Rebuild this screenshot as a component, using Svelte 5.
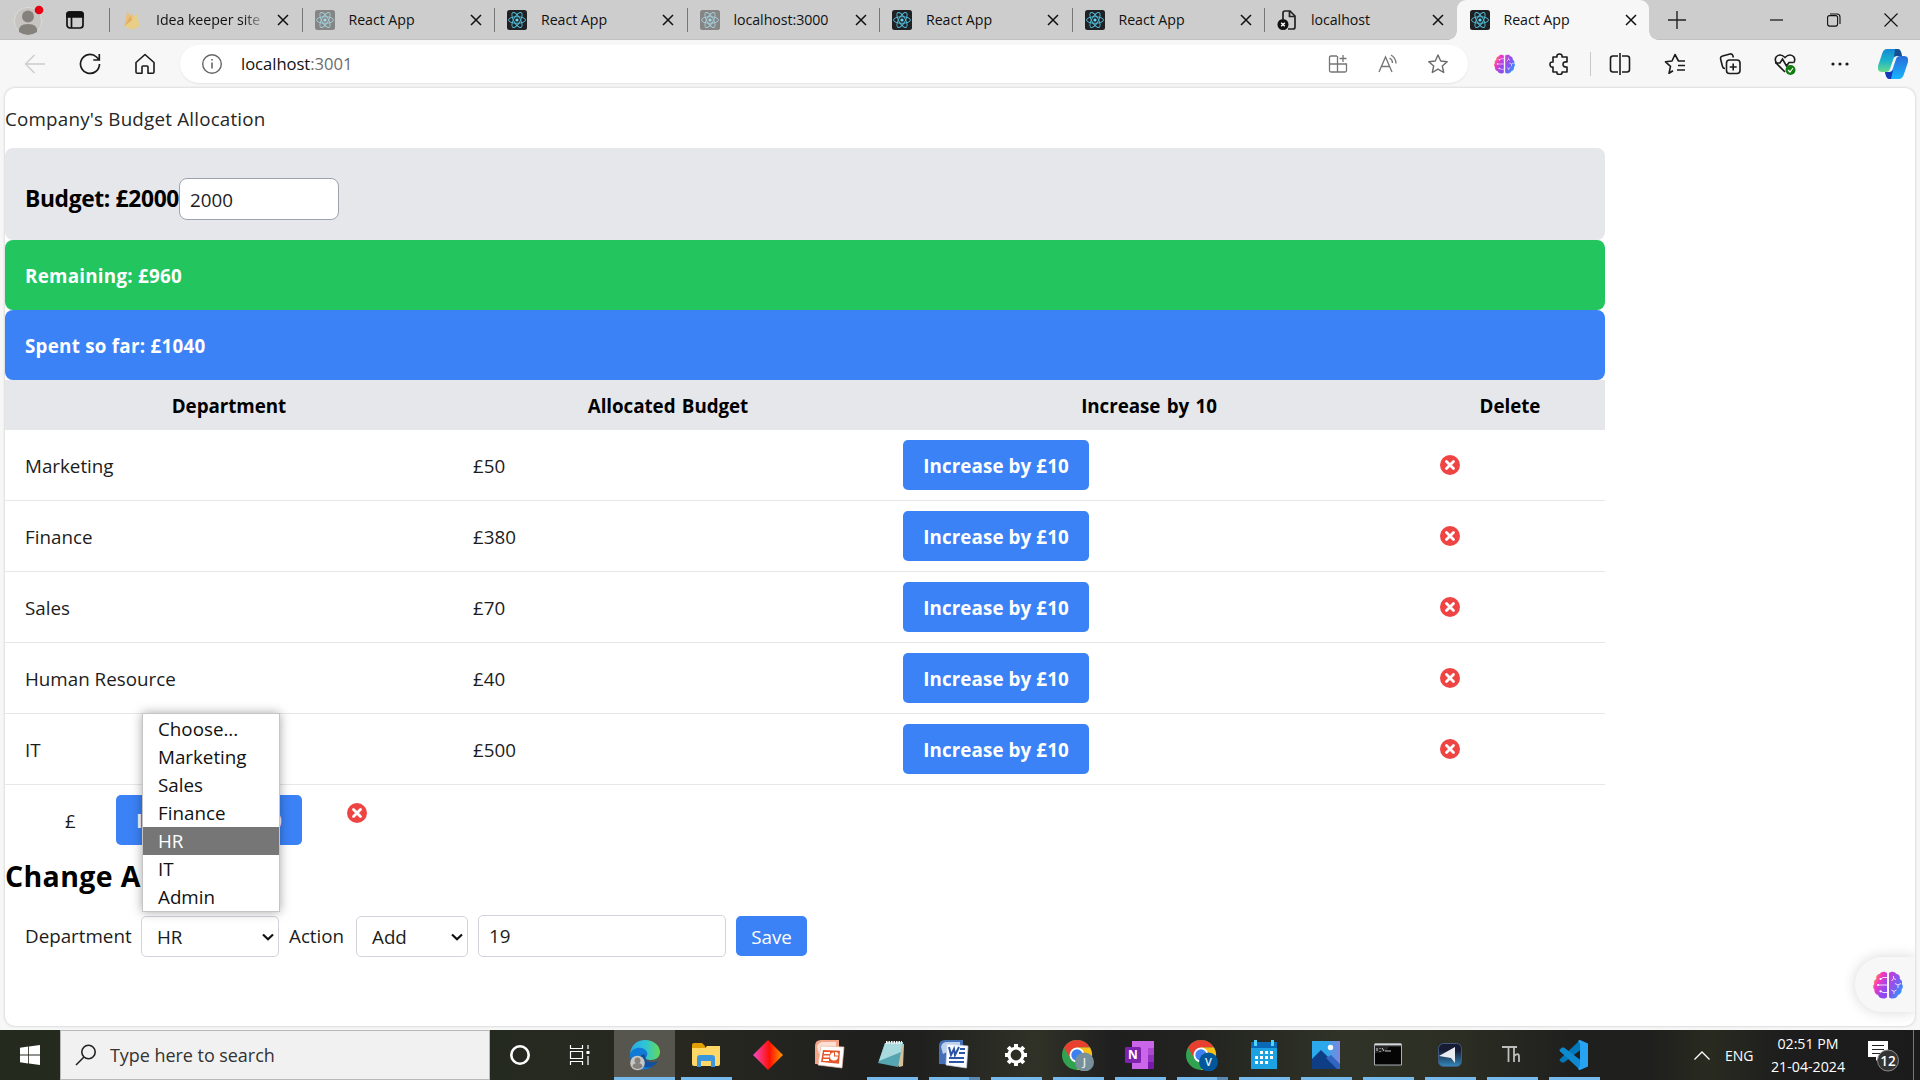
<script>
  const tabs = [
    { title: 'Idea keeper site -', icon: 'firebase' },
    { title: 'React App', icon: 'react-dim' },
    { title: 'React App', icon: 'react' },
    { title: 'localhost:3000', icon: 'react-dim' },
    { title: 'React App', icon: 'react' },
    { title: 'React App', icon: 'react' },
    { title: 'localhost', icon: 'page' },
    { title: 'React App', icon: 'react', active: true },
  ];
  const rows = [
    { name: 'Marketing', budget: 50 },
    { name: 'Finance', budget: 380 },
    { name: 'Sales', budget: 70 },
    { name: 'Human Resource', budget: 40 },
    { name: 'IT', budget: 500 },
  ];
  const options = ['Choose...', 'Marketing', 'Sales', 'Finance', 'HR', 'IT', 'Admin'];
  const apps = [
    { id: 'explorer', open: true },
    { id: 'diamond' },
    { id: 'powerpoint' },
    { id: 'notepad', open: true },
    { id: 'word', open: true, stacked: true },
    { id: 'settings', open: true },
    { id: 'chrome', open: true, letter: 'J', color: '#78909c' },
    { id: 'onenote', open: true },
    { id: 'chrome', open: true, stacked: true, letter: 'V', color: '#01579b' },
    { id: 'calendar', open: true },
    { id: 'photos', open: true },
    { id: 'terminal', open: true },
    { id: 'pointer', open: true },
    { id: 'thonny', open: true },
    { id: 'vscode', open: true },
  ];
  let selected = $state('HR');
</script>

{#snippet brain()}
  <svg class="brain" viewBox="0 0 30 28">
    <defs>
      <linearGradient id="brainL" x1="0" y1="0" x2="1" y2="1">
        <stop offset="0.1" stop-color="#ffa22b" /><stop offset="0.38" stop-color="#f436c2" /><stop offset="0.75" stop-color="#8d4bf0" />
      </linearGradient>
      <linearGradient id="brainR" x1="0" y1="0" x2="1" y2="1">
        <stop offset="0.1" stop-color="#c43fdd" /><stop offset="0.5" stop-color="#7a5cf3" /><stop offset="0.9" stop-color="#1fa6ff" />
      </linearGradient>
    </defs>
    <path fill="url(#brainL)" d="M14 2.2C12.5 0 8 .1 6.800 2.800 4.300 3 2.500 5.500 3.300 8 .8 9 .5 11.500 1.200 13-.4 14.500-.2 17 1.400 18.500 1 21.300 2.800 23.500 5 24 6 27.800 12 28.800 14 26Z" />
    <path fill="url(#brainR)" d="M16 2.200C17.500 0 22 .1 23.200 2.800 25.700 3 27.500 5.500 26.700 8 29.200 9 29.500 11.500 28.800 13 30.400 14.500 30.200 17 28.600 18.500 29 21.300 27.200 23.500 25 24 24 27.800 18 28.800 16 26Z" />
    <path fill="none" stroke="#f4dcff" stroke-width="1" d="M14 6.500H10L7.500 8.300M14 14H5M14 21.500H10L7.500 20M18.500 10l2-2.500V5M20.500 7.500l2.500 1M22 12.500l3 1.500 3-1.500M25 14v3M18.500 19l2.500 1.500 2.500-1.500M21 20.500V23" />
    <circle cx="7.500" cy="8" r="1.100" fill="#fff" /><circle cx="5" cy="14" r="1.100" fill="#fff" /><circle cx="7.500" cy="20.300" r="1.100" fill="#fff" />
  </svg>
{/snippet}

{#snippet favicon(kind)}
  {#if kind === 'firebase'}
    <svg class="fav" viewBox="0 0 20 20">
      <path d="M2.500 16 5.200.8l3 5.300 1.600-2.600 7.200 12.700L10 19.500Z" fill="#e9c07c" />
      <path d="M2.500 16 14.700 3.800 17.500 16 10 19.600Z" fill="#e8cf85" /><path d="M2.500 16 8.200 6l2 4Z" fill="#e4ac68" />
    </svg>
  {:else if kind === 'page'}
    <svg class="fav" viewBox="0 0 20 20" fill="none" stroke="#222" stroke-width="1.700">
      <path d="M6 9V3q0-2 2-2h5l5 5v11q0 2-2 2h-5M12.500 1v5.500H18" /><circle cx="6" cy="14.500" r="5.500" fill="#111" stroke="none" /><path stroke="#fff" stroke-width="1.400" d="m4.200 12.700 3.600 3.600m0-3.600-3.600 3.600" />
    </svg>
  {:else}
    <svg class="fav" viewBox="0 0 20 20" fill="none">
      <rect width="20" height="20" rx="2.500" fill={kind === 'react' ? '#202124' : '#858585'} />
      <g stroke={kind === 'react' ? '#53c1de' : '#a5cfda'} stroke-width="0.900">
        <ellipse cx="10" cy="10" rx="8.500" ry="3.300" /><ellipse cx="10" cy="10" rx="8.500" ry="3.300" transform="rotate(60 10 10)" /><ellipse cx="10" cy="10" rx="8.500" ry="3.300" transform="rotate(120 10 10)" />
      </g>
      <circle cx="10" cy="10" r="1.600" fill={kind === 'react' ? '#61dafb' : '#a9dbe7'} />
    </svg>
  {/if}
{/snippet}

{#snippet removeIcon()}
  <svg class="remove" viewBox="0 0 20 20"><circle cx="10" cy="10" r="10" fill="#ef4444" /><path d="m6.500 6.500 7 7m0-7-7 7" stroke="#fff" stroke-width="2.800" stroke-linecap="round" /></svg>
{/snippet}

{#snippet chevron()}
  <svg class="chev" viewBox="0 0 12 8"><path d="m1 1.500 5 4.800 5-4.800" fill="none" stroke="#111" stroke-width="2.200" /></svg>
{/snippet}

{#snippet appIcon(app)}
  <svg class="app-icon" viewBox="0 0 32 32">
    {#if app.id === 'explorer'}
      <path d="M2 6q0-2 2-2h8l3 3v4H2Z" fill="#e2a002" /><path d="M2 9h13l2-2h13v18q0 2-2 2H4q-2 0-2-2Z" fill="#ffd767" /><path d="M7 28V19q0-3 3-3h12q3 0 3 3v9h-4v-6H11v6Z" fill="#3a97de" />
    {:else if app.id === 'diamond'}
      <defs><linearGradient id="dia"><stop offset="0" stop-color="#f44cc8" /><stop offset=".55" stop-color="#ff1005" /><stop offset="1" stop-color="#ff9a00" /></linearGradient></defs>
      <path d="m16 1 15 15-15 15L1 16Z" fill="url(#dia)" />
    {:else if app.id === 'powerpoint'}
      <path d="M1 25V7q0-6 6-6h18v25Z" fill="#f2a388" /><path d="M3 8q1-5 6-5h13v4L5 15Z" fill="#fce0d4" /><path d="M7 7 30 8l-2 21L4 26Z" fill="#fff" stroke="#eab8a5" stroke-width=".7" /><path d="M9 11l17 .8-1 13L7 23Z" fill="#e5572a" /><path d="M10 14h6M9.500 17.500h6M9 21h6" stroke="#fff" stroke-width="2" /><path d="M20 13.500a4 4 0 1 0 4 4h-4Z" fill="#fff" /><path d="M21 13v3.500h3.500a3 3 0 0 0-3.500-3.500Z" fill="#fff" />
    {:else if app.id === 'notepad'}
      <path d="m10 3 18 2-1 22-4 1Z" fill="#d3c19b" /><path d="M9 4 27 3 22 28 2 24Z" fill="#56a6b1" /><path d="M9 4 27 3l-2 10L3 22Z" fill="#a9dadd" /><path d="M10 3.500h16" stroke="#f2f2f2" stroke-width="3" stroke-dasharray="1.500 1" />
    {:else if app.id === 'word'}
      <path d="M1 25V7q0-6 6-6h18v25Z" fill="#4470b8" /><path d="M3 8q1-5 6-5h13v4L5 15Z" fill="#bdd0ee" /><path d="m9 5 21 2-1.500 22L8 26Z" fill="#fafcff" stroke="#c4d1e8" stroke-width=".7" /><path d="m11 8 2 8 3-6 1 6 4-8" fill="none" stroke="#2b55a5" stroke-width="2" /><path d="M22 10h5M21 14h6M11 19h15M11 23h15" stroke="#2b55a5" stroke-width="1.800" />
    {:else if app.id === 'settings'}
      <g stroke="#fff" stroke-width="4"><path d="M16 5v4M16 23v4M5 16h4M23 16h4M8.200 8.200l3 3M20.800 20.800l3 3M8.200 23.800l3-3M20.800 11.200l3-3" /></g><circle cx="16" cy="16" r="7" fill="none" stroke="#fff" stroke-width="3.200" />
    {:else if app.id === 'chrome'}
      <circle cx="15" cy="16" r="15" fill="#31a350" /><path d="M2 8.500a15 15 0 0 1 26 0H15L8.500 20Z" fill="#e83f30" /><path d="M15 8.500h13A15 15 0 0 1 15 31l6.500-11Z" fill="#fbc116" /><circle cx="15" cy="16" r="7.500" fill="#fff" /><circle cx="15" cy="16" r="5.700" fill="#3d80f0" /><circle cx="22.500" cy="23" r="9.500" fill={app.color} />
      <text x="22.500" y="27.200" text-anchor="middle" class="badge-letter">{app.letter}</text>
    {:else if app.id === 'onenote'}
      <path d="M8 2h22v28H8Z" fill="#cb66ea" /><path d="M24 9h6v7h-6Z" fill="#ad49d1" /><path d="M24 16h6v7h-6Z" fill="#9332bf" /><path d="M24 23h6v7h-6Z" fill="#7719aa" /><rect x="1" y="8" width="16" height="16" rx="1.500" fill="#7e22b0" /><text x="9" y="20.300" text-anchor="middle" class="note-letter">N</text>
    {:else if app.id === 'calendar'}
      <path d="M3 3h26v7H3Z" fill="#0a6ab8" /><path d="M3 9h26v21H3Z" fill="#1ca1e2" /><path d="M7.500 1v6M24.500 1v6" stroke="#50d5ff" stroke-width="3" /><g fill="#fff"><path d="M12 12h3v3h-3zM17 12h3v3h-3zM22 12h3v3h-3zM7 17h3v3H7zM12 17h3v3h-3zM17 17h3v3h-3zM22 17h3v3h-3zM7 22h3v3H7zM12 22h3v3h-3zM17 22h3v3h-3z" /></g>
    {:else if app.id === 'photos'}
      <defs><linearGradient id="sky"><stop offset=".5" stop-color="#2ba9ec" /><stop offset="1" stop-color="#8285dd" /></linearGradient></defs>
      <path d="M2 2h28v28H2Z" fill="url(#sky)" /><path d="M2 20 11 11 30 30H2Z" fill="#0e3f86" /><path d="m16 19 5-3 9 9v5h-3Z" fill="#3265c0" /><circle cx="20.500" cy="8.500" r="2.700" fill="#fff" />
    {:else if app.id === 'terminal'}
      <path d="M2.500 5h27v21h-27Z" fill="#050505" stroke="#a9afb4" /><path d="M3 5.500h26" stroke="#d4d8dc" stroke-width="2" /><path d="M5 9v3M8 9v1M8 12v1M10 9l2 3M13 12h6" stroke="#ccc" /><path d="M3 14q12 0 14-6h12v-1H3Z" fill="#fff" opacity=".13" />
    {:else if app.id === 'pointer'}
      <defs><linearGradient id="ptr" x2="0" y2="1"><stop offset=".3" stop-color="#171b34" /><stop offset="1" stop-color="#3489bd" /></linearGradient></defs>
      <rect x="4.500" y="4.500" width="23" height="23" rx="5" fill="url(#ptr)" stroke="#41597c" /><path d="M21 8v16l-4-5-12-2Z" fill="#e9edf2" />
    {:else if app.id === 'thonny'}
      <path d="M6 8h15M12.500 8v15M18 9v14M18 17q5-4 5 1v5" fill="none" stroke="#bdbdbd" stroke-width="1.800" />
    {:else}
      <path d="m22 2-2 1L2 20q-1 1 0 2l2 1.500h2L25 9Z" fill="#0078b9" /><path d="M4 8.500h2L25 23l-3 8L2 12.200q-1-1 0-2Z" fill="#0d8ad0" /><path d="M22 1 30 4.500v23L22 31q-1 0-2-1l2-3V5l-2-3q1-1 2-1Z" fill="#27a3f2" />
    {/if}
  </svg>
{/snippet}

<div class="screen">
  <div class="tabstrip">
    <div class="strip-left">
      <svg class="avatar" viewBox="0 0 30 36"><circle cx="14" cy="19" r="13.700" fill="#c7c5c1" stroke="#dedbd4" /><circle cx="14" cy="14.500" r="6" fill="#85827d" /><path d="M5 30q-1-8 9-8t9 8q-9 6-18 0Z" fill="#85827d" /><circle cx="25" cy="8" r="4.300" fill="#e60012" /></svg>
      <svg class="workspace" viewBox="0 0 20 20" fill="none" stroke="#111" stroke-width="1.700"><rect x="2" y="2" width="16" height="16" rx="3" /><path d="M2 5V4q0-2 2-2h12q2 0 2 2v3H2Z" fill="#111" /><path d="M6.500 7v11" /></svg>
    </div>
    {#each tabs as tab, i}
      <div class="tab" class:active={tab.active}>
        {@render favicon(tab.icon)}
        <span class="tab-title" class:faded={i === 0}>{tab.title}</span>
        <svg class="x" viewBox="0 0 12 12"><path d="m1 1 10 10m0-10L1 11" stroke="#111" stroke-width="1.500" /></svg>
      </div>
    {/each}
    <div class="window-tools">
      <svg class="plus" viewBox="0 0 18 18"><path d="M9 0v18M0 9h18" stroke="#222" stroke-width="1.400" /></svg>
      <svg class="win" viewBox="0 0 14 14"><path d="M0 7h13" stroke="#111" stroke-width="1.200" /></svg>
      <svg class="win" viewBox="0 0 14 14" fill="none" stroke="#111" stroke-width="1.100"><rect x=".6" y="2.600" width="10" height="10.500" rx="2" /><path d="M3 1h7q3 0 3 3v7" /></svg>
      <svg class="win" viewBox="0 0 14 14"><path d="m.5.5 13 13m0-13-13 13" stroke="#111" stroke-width="1.100" /></svg>
    </div>
  </div>

  <div class="toolbar">
    <div class="nav">
      <svg viewBox="0 0 22 22" fill="none" stroke="#ccc" stroke-width="1.400"><path d="M21 11H2M10.500 2 1.500 11l9 9" /></svg>
      <svg viewBox="0 0 22 22" fill="none" stroke="#1b1b1b" stroke-width="1.700"><path d="M20.500 11a9.500 9.500 0 1 1-3-7l2.500 2.500M20.300 1v6h-6" /></svg>
      <svg viewBox="0 0 22 22" fill="none" stroke="#1b1b1b" stroke-width="1.600" stroke-linejoin="round"><path d="m2 9.500 9-8 9 8V19q0 1.300-1.300 1.300H14V14q0-1-1-1H9q-1 0-1 1v6.300H3.300Q2 20.300 2 19Z" /></svg>
    </div>
    <div class="address">
      <svg class="info" viewBox="0 0 22 22" fill="none" stroke="#666"><circle cx="11" cy="11" r="9.300" stroke-width="1.400" /><path d="M11 9.500v6M11 6v1.500" stroke-width="1.600" /></svg>
      <span class="url">localhost<span>:3001</span></span>
      <div class="address-tools">
        <svg viewBox="0 0 20 20" fill="none" stroke="#757575" stroke-width="1.300"><path d="M9 2H3q-1.500 0-1.500 1.500v13Q1.500 18 3 18h14q1.500 0 1.500-1.500V10H1.500M9.500 2v16M15 1v7M11.500 4.500h7" /></svg>
        <svg viewBox="0 0 20 20" fill="none" stroke="#757575" stroke-width="1.300"><path d="M1 18 7.500 3 14 18M3.500 12.500h8M11.500 4q3 1.500 3 5M13 1q5 3 5 8.500" /></svg>
        <svg viewBox="0 0 20 20" fill="none" stroke="#6b6b6b" stroke-width="1.400" stroke-linejoin="round"><path d="m10 1 2.700 6 6.500.7-4.900 4.300 1.400 6.500-5.700-3.300-5.700 3.300 1.400-6.500L.8 7.700l6.500-.7Z" /></svg>
      </div>
    </div>
    <div class="extensions">
      <span class="tool">{@render brain()}</span>
      <svg class="tool" viewBox="0 0 22 22" fill="none" stroke="#1b1b1b" stroke-width="1.600"><path d="M5 4h4q-.5-3 2.500-3T14 4h5v5q-4-.7-4 2.300t4 2.700v5h-5q.5 2.500-2.500 2.500T9 19H5v-5q-3 .5-3-2.500T5 9Z" stroke-linejoin="round" /></svg>
      <i class="divider"></i>
      <svg class="tool" viewBox="0 0 22 22" fill="none" stroke="#1b1b1b" stroke-width="1.600"><path d="M8 3H4Q1.500 3 1.500 5.500v11Q1.500 19 4 19h4M14 3h4q2.500 0 2.500 2.500v11Q20.500 19 18 19h-4M8 3v16M14 3v16" stroke-opacity="1" stroke-dasharray="none" class="split-sides" /><path d="M11 0v22" /></svg>
      <svg class="tool" viewBox="0 0 22 22" fill="none" stroke="#1b1b1b" stroke-width="1.600" stroke-linejoin="round"><path d="M21 8h-6.500L11 1.500 8 8l-6.500.8 5 4.500-1.500 7 4-2.500M14 12.500h7M13 17h8" /></svg>
      <svg class="tool" viewBox="0 0 22 22" fill="none" stroke="#1b1b1b" stroke-width="1.600"><rect x="7.500" y="7" width="13.500" height="13.500" rx="3" /><path d="M14.200 10.500v7M10.700 14h7M6 15.500q-2 0-2.500-2L1.600 6q-.4-2.400 2-3L11 1q2.400-.5 3 2l.3 1.500" /></svg>
      <svg class="tool" viewBox="0 0 22 22" fill="none" stroke="#1b1b1b" stroke-width="1.600"><path d="m11 19-8-8Q-.2 6.500 2.500 3.500q4-3.500 8.500 1 4.500-4.500 8.500-1Q22 6.500 19.500 10M1 10h5l2.500-4 4 7 2.500-3.500h4" /><circle cx="16.500" cy="17" r="5" fill="#107c10" stroke="none" /><path d="m14 17 2 2 3-4" stroke="#fff" stroke-width="1.200" /></svg>
      <svg class="tool" viewBox="0 0 22 22" fill="#1b1b1b"><circle cx="4" cy="11" r="1.600" /><circle cx="11" cy="11" r="1.600" /><circle cx="18" cy="11" r="1.600" /></svg>
      <svg class="copilot" viewBox="0 0 30 30">
        <defs><linearGradient id="cpa" x2="0" y2="1"><stop offset="0" stop-color="#1588d5" /><stop offset=".5" stop-color="#1bb3cc" /><stop offset="1" stop-color="#68da8b" /></linearGradient><linearGradient id="cpb" x2="0" y2="1"><stop offset="0" stop-color="#2b6bd9" /><stop offset="1" stop-color="#17b5ff" /></linearGradient></defs>
        <path d="M9 0h11q2 0 3 3l1 4h-5q-3 0-4 4l-3 9q-1 3-4 3H4q-5 0-4-6L4 5Q5.500 0 9 0Z" fill="url(#cpa)" /><path d="M17 0h3q2 0 3 3l1 4h-5q-2 0-3 1Z" fill="#164f91" /><path d="M21 30H11q-2 0-3-3l-1-4h4q3 0 4-4l3-9q1-3 4-3h4q5 0 4 6l-4 12q-1.500 5-5 5Z" fill="url(#cpb)" /><path d="M13 30h-2q-2 0-3-3l-1-4h5q2 0 3-2Z" fill="#1438b8" />
      </svg>
    </div>
  </div>

  <div class="viewport">
    <main class="page">
      <p class="title">Company's Budget Allocation</p>
      <section class="container">
        <div class="budget"><strong>Budget: £2000</strong><div class="number">2000</div></div>
        <div class="banner green">Remaining: £960</div>
        <div class="banner blue">Spent so far: £1040</div>
        <div class="row head"><span>Department</span><span>Allocated Budget</span><span>Increase by 10</span><span>Delete</span></div>
        {#each rows as row}
          <div class="row">
            <span class="cell">{row.name}</span><span class="cell">£{row.budget}</span>
            <span><button class="increase">Increase by £10</button></span>
            <span class="del">{@render removeIcon()}</span>
          </div>
        {/each}
      </section>
      <div class="empty-row"><span>£</span><button class="increase">Increase by £10</button>{@render removeIcon()}</div>
      <h2>Change Allocation</h2>
      <div class="form">
        <span class="label-department">Department</span>
        <div class="select department">
          {selected}{@render chevron()}
          <div class="menu">
            {#each options as option}
              <div class="option" class:current={option === selected}>{option}</div>
            {/each}
          </div>
        </div>
        <span class="label-action">Action</span>
        <div class="select action">Add{@render chevron()}</div>
        <div class="amount">19</div>
        <button class="save">Save</button>
      </div>
      <div class="assistant">{@render brain()}</div>
    </main>
  </div>

  <footer class="taskbar">
    <div class="start"><svg viewBox="0 0 20 20" fill="#fff"><path d="M0 2.700 8.200 1.500V9.500H0ZM9 1.400 20 0v9.500H9ZM0 10.400h8.200v8L0 17.300ZM9 10.400h11V20L9 18.500Z" /></svg></div>
    <div class="search">
      <svg viewBox="0 0 22 22" fill="none" stroke="#222" stroke-width="1.600"><circle cx="13.500" cy="8" r="6.700" /><path d="M9 13 1 21" /></svg>
      <span>Type here to search</span>
    </div>
    <div class="sys"><svg viewBox="0 0 22 22"><circle cx="11" cy="11" r="8.700" fill="none" stroke="#fff" stroke-width="2.600" /></svg></div>
    <div class="sys"><svg viewBox="0 0 22 22" fill="none" stroke="#fff" stroke-width="1.200"><path d="M1.500 1v3.500h12V1M1.500 21v-3.500h12V21M1.500 7.500h12v7h-12ZM19 1v4M19 12v9" /><path d="M17.500 7h3v3h-3Z" fill="#fff" stroke="none" /></svg></div>
    <div class="edge">
      <svg class="app-icon" viewBox="0 0 32 32">
        <defs><linearGradient id="ed"><stop offset="0" stop-color="#2aa9e5" /><stop offset=".5" stop-color="#2fc4d8" /><stop offset="1" stop-color="#63da58" /></linearGradient></defs>
        <path d="M1 15C2 6 8 1 16 1c9 0 15 6 15 12 0 5-4 8-9 8-4 0-6-1-5-3 3-3 0-7-5-8-5-.500-9 1-11 5Z" fill="url(#ed)" /><path d="M1 15C3 10 8 8 12 9c6 1 8 6 5 9-1-4-6-3-6 2 0 6 7 10 13 7-6 6-23 6-23-12Z" fill="#0f7bd6" /><path d="M11 20c0-4 3-6 5-4-1 6 5 9 13 6-6 10-18 8-18-2Z" fill="#11519f" />
        <circle cx="8.500" cy="24" r="7.300" fill="#c9c7c4" /><circle cx="8.500" cy="21.500" r="3" fill="#85827d" /><path d="M3.500 28q0-4 5-4t5 4q-5 4-10 0Z" fill="#85827d" />
      </svg>
    </div>
    {#each apps as app}
      <div class="app" class:open={app.open} class:stacked={app.stacked}>{@render appIcon(app)}</div>
    {/each}
    <div class="tray">
      <svg class="up" viewBox="0 0 16 9"><path d="m.5 8.500 7.500-7.500 7.500 7.500" fill="none" stroke="#fff" stroke-width="1.300" /></svg>
      <span class="lang">ENG</span>
      <div class="clock"><span>02:51 PM</span><span>21-04-2024</span></div>
      <svg class="notice" viewBox="0 0 32 32"><path d="M0 1h20v16h-8l-4 4v-4H0Z" fill="#fff" /><path d="M4 5.500h12M4 9.500h12M4 13.500h8" stroke="#222" stroke-width="1.200" /><circle cx="20" cy="20.500" r="10.500" fill="#343434" stroke="#8b8b8b" /><text x="20" y="25.500" text-anchor="middle">12</text></svg>
      <i class="desktop-edge"></i>
    </div>
  </footer>
</div>

<style>
  :global(body) { margin: 0; overflow: hidden; }
  * { box-sizing: border-box; }
  svg { display: block; flex: none; }
  button { font: inherit; border: 0; }
  .screen { width: 1920px; height: 1080px; display: flex; flex-direction: column; background: #f7f7f7; font-family: 'Open Sans', 'Noto Sans', sans-serif; color: #1c1c1c; overflow: hidden; }

  .tabstrip { height: 40px; flex: none; display: flex; background: #cdcdcd; box-shadow: inset 0 -1px #c2c2c2; }
  .strip-left { width: 109px; display: flex; align-items: center; padding-left: 14px; gap: 21px; flex: none; }
  .avatar { width: 30px; height: 36px; }
  .workspace { width: 20px; height: 20px; }
  .tab { width: 192.500px; flex: none; display: flex; align-items: center; padding-left: 13px; background: linear-gradient(#777, #777) 0 8px / 1px 24px no-repeat; }
  .fav { width: 20px; height: 20px; }
  .tab-title { width: 109px; margin: 0 12px 0 14px; font-size: 14.200px; line-height: 20px; letter-spacing: -0.05px; white-space: nowrap; overflow: hidden; color: #111; }
  .faded { -webkit-mask-image: linear-gradient(90deg, #000 80%, transparent 102%); mask-image: linear-gradient(90deg, #000 80%, transparent 102%); }
  .x { width: 12px; height: 12px; }
  .active { position: relative; background: #f7f7f7; border-radius: 9px 9px 0 0; }
  .active::before, .active::after { content: ''; position: absolute; bottom: 0; width: 9px; height: 9px; }
  .active::before { left: -9px; background: radial-gradient(circle at 0 0, transparent 8.500px, #f7f7f7 9px); }
  .active::after { right: -9px; background: radial-gradient(circle at 100% 0, transparent 8.500px, #f7f7f7 9px); }
  .window-tools { display: flex; align-items: center; padding-left: 19px; }
  .plus { width: 18px; height: 18px; margin-right: 84px; }
  .win { width: 14px; height: 14px; margin-right: 43px; }

  .toolbar { height: 47px; flex: none; display: flex; align-items: center; }
  .nav { width: 180px; padding-left: 24px; display: flex; gap: 33px; flex: none; }
  .nav svg { width: 22px; height: 22px; }
  .address { width: 1288px; height: 38px; border-radius: 19px; background: #fff; display: flex; align-items: center; flex: none; box-shadow: 0 1px 2px #e3e3e3; }
  .info { width: 22px; height: 22px; margin: 0 18px 0 21px; }
  .url { font-size: 16.600px; letter-spacing: -0.03px; color: #111; flex: 1; }
  .url span { color: #6d6d6d; }
  .address-tools { display: flex; gap: 30px; padding-right: 20px; }
  .address-tools svg { width: 20px; height: 20px; }
  .extensions { flex: 1; display: flex; align-items: center; padding-left: 25px; }
  .tool { width: 22px; height: 22px; margin-right: 33px; display: grid; place-items: center; }
  .split-sides { d: path('M9 3H4Q1.500 3 1.500 5.500v11Q1.500 19 4 19h5M13 3h5q2.500 0 2.500 2.500v11Q20.500 19 18 19h-5'); }
  .divider { width: 1px; height: 24px; background: #c8c8c8; margin: 0 18px 0 -13px; }
  .brain { width: 21px; height: 20px; }
  .copilot { width: 30px; height: 30px; margin-left: -6px; }

  .viewport { height: 943px; flex: none; padding: 1px 5px 4px; }
  .page { position: relative; height: 938px; background: #fff; border-radius: 10px; box-shadow: 0 0 2px 1px #dedede; font-size: 18.800px; line-height: 30px; overflow: hidden; }
  .title { margin: 0; padding: 16px 0 14px; height: 60px; color: #262626; letter-spacing: 0.2px; }
  .container { width: 1600px; }
  .budget { height: 92px; padding: 30px 20px; background: #e5e7eb; border-radius: 8px; display: flex; }
  .budget strong { width: 154px; padding-top: 1px; white-space: nowrap; font-size: 22.800px; line-height: 40px; letter-spacing: -0.350px; color: #000; }
  .number { width: 160px; height: 42px; border: 1px solid #9ca3af; border-radius: 8px; background: #fff; padding: 7px 10px; line-height: 28px; }
  .banner { height: 70px; padding: 21px 20px; border-radius: 8px; color: #fff; font-weight: 700; letter-spacing: 0.25px; }
  .green { background: #22c55e; }
  .blue { background: #3b82f6; }
  .row { display: grid; grid-template-columns: 448px 430px 532px 190px; height: 71px; align-items: center; border-bottom: 1px solid #e5e7eb; }
  .row > span { padding-left: 20px; }
  .row > .cell { padding-top: 2px; }
  .row > .del { padding-left: 25px; }
  .head { height: 50px; background: #e5e7eb; border: 0; font-weight: 700; text-align: center; color: #000; letter-spacing: -0.05px; word-spacing: 1.500px; padding-top: 2px; }
  .head > span { padding: 0; }
  .increase { display: block; width: 186px; height: 50px; padding: 1px 0 0; border-radius: 5px; background: #3b82f6; color: #fff; font-weight: 700; letter-spacing: 0.1px; white-space: nowrap; }
  .remove { width: 20px; height: 20px; }
  .empty-row { height: 71px; display: flex; align-items: flex-start; padding: 10px 0 0 60px; }
  .empty-row span { width: 51px; line-height: 52px; }
  .empty-row .remove { margin: 8px 0 0 45px; }
  h2 { margin: 0; height: 59px; font-size: 28.500px; line-height: 40px; letter-spacing: 0.350px; color: #000; }
  .form { display: flex; align-items: center; padding-left: 20px; height: 42px; }
  .label-department { width: 116px; }
  .label-action { width: 77px; padding-left: 10px; }
  .select { position: relative; height: 41px; border: 1px solid #d1d5db; border-radius: 5px; padding: 5px 0 0 15px; }
  .department { width: 138px; }
  .action { width: 112px; }
  .chev { position: absolute; right: 4px; top: 16px; width: 12px; height: 8px; }
  .amount { width: 248px; height: 42px; margin: 0 10px; border: 1px solid #d1d5db; border-radius: 5px; padding: 5px 10px; }
  .save { width: 71px; height: 40px; border-radius: 5px; background: #3b82f6; color: #fff; padding: 1px 0 0; }
  .menu { position: absolute; left: 0; bottom: 44px; width: 138px; padding: 1px 0 0; background: #fff; border: 1px solid #c5c5c5; box-shadow: 0 0 10px rgba(0, 0, 0, 0.35); color: #111; }
  .option { height: 28px; line-height: 29px; padding-left: 15px; }
  .current { background: #767676; color: #fff; }
  .assistant { position: absolute; right: 0; top: 869px; width: 60px; height: 55px; background: #f7f7f7; border-radius: 28px 0 0 28px; box-shadow: 0 0 14px rgba(0, 0, 0, 0.16); display: grid; place-items: center; padding-left: 6px; }
  .assistant .brain { width: 30px; height: 28px; }

  .taskbar { height: 50px; flex: none; display: flex; background: linear-gradient(90deg, #252a1e 0, #252a20 26%, #282821 36%, #1f1f1e 45%, #20201f 48%, #303227 54%, #1f1f1f 58%, #222320 62%, #303327 70%, #2c2e23 76%, #1f1f1e 82%, #1f1f1d 86%, #292b20 89%, #1d1d1d 93%, #1b1b1b 100%); color: #fff; }
  .start { width: 60px; display: grid; place-items: center; }
  .start svg { width: 20px; height: 20px; }
  .search { width: 430px; border: 1px solid #b8b8b8; background: #f1f1f1; color: #333; display: flex; align-items: center; padding-left: 14px; font-size: 18px; letter-spacing: -0.05px; }
  .search svg { width: 22px; height: 22px; margin-right: 13px; }
  .sys { width: 60px; display: grid; place-items: center; }
  .sys svg { width: 22px; height: 22px; }
  .edge { width: 61px; margin-left: 4px; background: #56564f; border-bottom: 3px solid #76b9ed; display: grid; justify-items: center; padding-top: 9px; }
  .app-icon { width: 32px; height: 32px; }
  .app { width: 62px; display: grid; justify-items: center; align-items: start; padding-top: 9px; }
  .open { background: linear-gradient(#76b9ed, #76b9ed) 6px 47px / 51px 3px no-repeat; }
  .stacked { background: linear-gradient(90deg, #76b9ed 40px, #5c89b2 40px) 6px 47px / 51px 3px no-repeat; }
  .badge-letter { font-size: 11px; font-weight: 600; fill: #e6eef2; }
  .note-letter { font-size: 12px; font-weight: 700; fill: #fff; }
  .tray { flex: 1; display: flex; align-items: center; padding-left: 89px; }
  .up { width: 16px; height: 9px; }
  .lang { width: 30px; margin-left: 15px; font-size: 14px; letter-spacing: -0.05px; }
  .clock { width: 90px; margin-left: 8px; display: flex; flex-direction: column; align-items: center; font-size: 14.200px; line-height: 23px; letter-spacing: 0; white-space: nowrap; }
  .notice { width: 32px; height: 32px; margin: 2px 0 0 15px; }
  .notice text { fill: #fff; font-size: 13.500px; font-weight: 600; }
  .desktop-edge { width: 1px; height: 50px; background: #777; margin-left: 13px; }
</style>
